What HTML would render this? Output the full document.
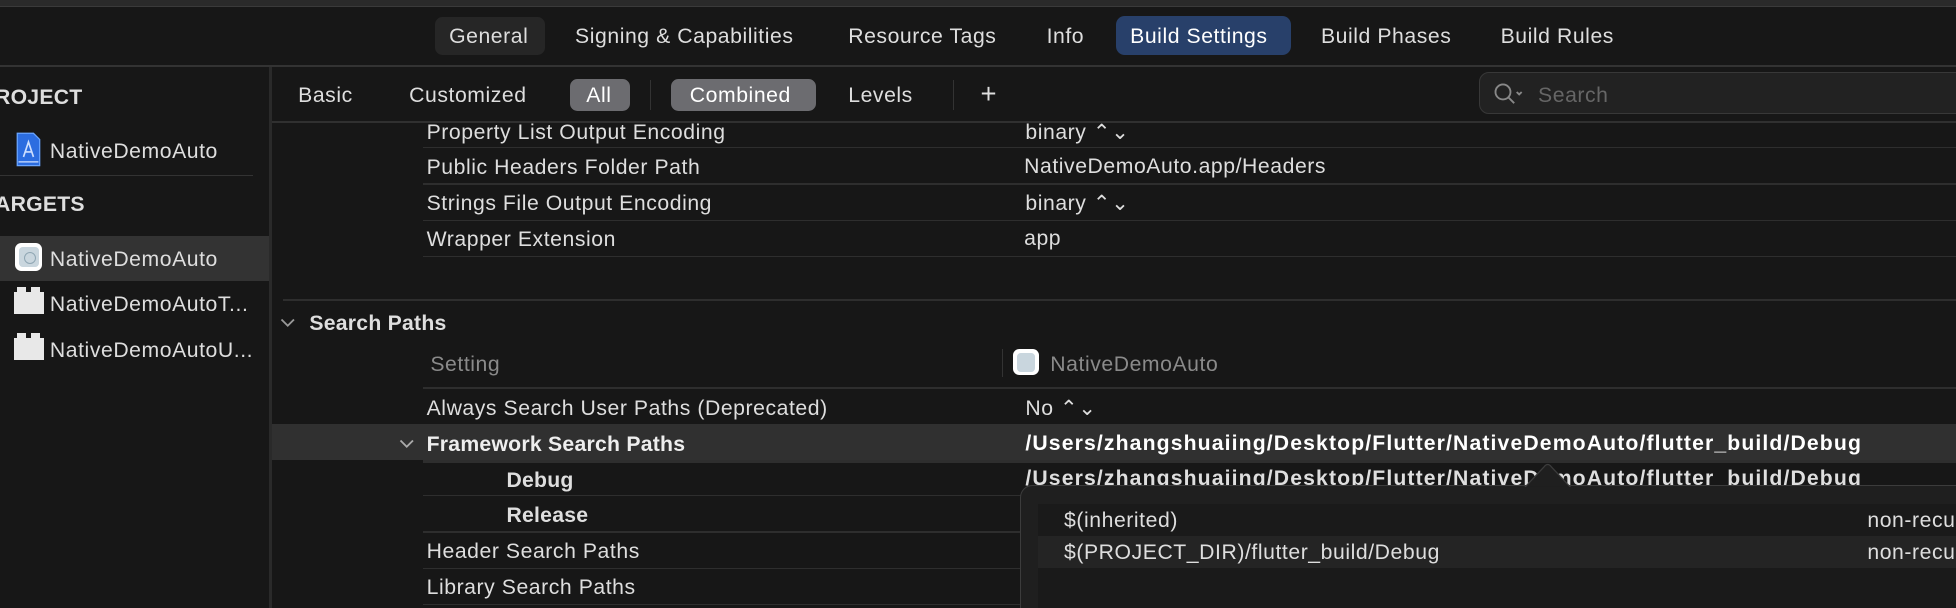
<!DOCTYPE html>
<html><head><meta charset="utf-8">
<style>
html,body{margin:0;padding:0;background:#171717;width:1956px;height:608px;overflow:hidden}
#w{zoom:1.2474;position:relative;width:1568px;height:488px;font-family:"Liberation Sans",sans-serif;color:#dedede;font-size:17px;background:#171717}
.a{position:absolute;white-space:nowrap;line-height:20px;margin-top:2px;letter-spacing:0.45px}
.hl{position:absolute;height:1px;background:#2e2e2e}
.b{font-weight:bold;letter-spacing:0.2px}
.g{color:#8a8a8a}
</style></head><body><div id="w">
<div style="position:absolute;left:0;top:0;width:1568px;height:5px;background:#2a2a2a"></div>
<div style="position:absolute;left:0;top:5px;width:1568px;height:1px;background:#3a3a3a"></div>
<div style="position:absolute;left:349px;top:14px;width:88px;height:30px;background:#262626;border-radius:6px"></div>
<div style="position:absolute;left:895px;top:13px;width:140px;height:31px;background:#28406a;border-radius:7px"></div>
<div class="a" style="left:360px;top:18px">General</div>
<div class="a" style="left:461px;top:18px">Signing &amp; Capabilities</div>
<div class="a" style="left:680px;top:18px">Resource Tags</div>
<div class="a" style="left:839px;top:18px">Info</div>
<div class="a" style="left:906px;top:18px;color:#fff">Build Settings</div>
<div class="a" style="left:1059px;top:18px">Build Phases</div>
<div class="a" style="left:1203px;top:18px">Build Rules</div>
<div style="position:absolute;left:0;top:52px;width:1568px;height:2px;background:#333"></div>
<div style="position:absolute;left:216px;top:54px;width:2px;height:434px;background:#2a2a2a"></div>
<div class="a b" style="left:-4px;top:67px;font-size:17px">ROJECT</div>
<svg style="position:absolute;left:13px;top:106px" width="20" height="28" viewBox="0 0 20 28"><path d="M1 1h13l5 5v21H1z" fill="#2c6de0" stroke="#6aa5ff"/><path d="M6 20l4-12 4 12M7 16h6" stroke="#cfe0ff" fill="none" stroke-width="1.3"/><path d="M2 24h16" stroke="#cfe0ff"/></svg>
<div class="a" style="left:40px;top:110px">NativeDemoAuto</div>
<div style="position:absolute;left:0;top:140px;width:203px;height:1px;background:#333"></div>
<div class="a b" style="left:-4px;top:153px">ARGETS</div>
<div style="position:absolute;left:0;top:189px;width:216px;height:36px;background:#333"></div>
<div style="position:absolute;left:12px;top:195px;width:22px;height:22px;background:#fff;border-radius:5px"></div>
<div style="position:absolute;left:15px;top:198px;width:16px;height:16px;background:#c9d6de;border-radius:3px"></div>
<div style="position:absolute;left:19px;top:202px;width:8px;height:8px;border:1px solid #8fa6b3;border-radius:50%"></div>
<div class="a" style="left:40px;top:197px">NativeDemoAuto</div>
<div style="position:absolute;left:11px;top:234px;width:24px;height:18px;background:#e8e8e8"></div>
<div style="position:absolute;left:14px;top:230px;width:7px;height:5px;background:#e8e8e8"></div>
<div style="position:absolute;left:25px;top:230px;width:7px;height:5px;background:#e8e8e8"></div>
<div class="a" style="left:40px;top:233px">NativeDemoAutoT...</div>
<div style="position:absolute;left:11px;top:271px;width:24px;height:18px;background:#e8e8e8"></div>
<div style="position:absolute;left:14px;top:267px;width:7px;height:5px;background:#e8e8e8"></div>
<div style="position:absolute;left:25px;top:267px;width:7px;height:5px;background:#e8e8e8"></div>
<div class="a" style="left:40px;top:270px">NativeDemoAutoU...</div>
<div class="a" style="left:239px;top:65px">Basic</div>
<div class="a" style="left:328px;top:65px">Customized</div>
<div style="position:absolute;left:457px;top:63px;width:48px;height:26px;background:#6c6c70;border-radius:6px"></div>
<div class="a" style="left:470px;top:65px;color:#fff">All</div>
<div style="position:absolute;left:521px;top:64px;width:1px;height:24px;background:#333"></div>
<div style="position:absolute;left:538px;top:63px;width:116px;height:26px;background:#6c6c70;border-radius:6px"></div>
<div class="a" style="left:553px;top:65px;color:#fff">Combined</div>
<div class="a" style="left:680px;top:65px">Levels</div>
<div style="position:absolute;left:764px;top:64px;width:1px;height:24px;background:#333"></div>
<div class="a" style="left:786px;top:64px;font-size:22px">+</div>
<div style="position:absolute;left:1186px;top:58px;width:400px;height:33px;background:#222;border:1px solid #383838;border-radius:8px;box-sizing:border-box"></div>
<svg style="position:absolute;left:1197px;top:66px" width="26" height="20" viewBox="0 0 26 20"><circle cx="8" cy="8" r="6" fill="none" stroke="#888" stroke-width="1.5"/><path d="M12 12l5 5M19 8l2 2 2-2" stroke="#888" stroke-width="1.5" fill="none"/></svg>
<div class="a g" style="left:1233px;top:65px;color:#666">Search</div>
<div style="position:absolute;left:218px;top:97px;width:1350px;height:2px;background:#303030"></div>
<div class="a" style="left:342px;top:95px">Property List Output Encoding</div>
<div class="a" style="left:822px;top:95px">binary ⌃⌄</div>
<div class="hl" style="left:339px;top:118px;width:1229px"></div>
<div class="a" style="left:342px;top:123px">Public Headers Folder Path</div>
<div class="a" style="left:821px;top:122px">NativeDemoAuto.app/Headers</div>
<div class="hl" style="left:339px;top:147px;width:1229px"></div>
<div class="a" style="left:342px;top:152px">Strings File Output Encoding</div>
<div class="a" style="left:822px;top:152px">binary ⌃⌄</div>
<div class="hl" style="left:339px;top:176px;width:1229px"></div>
<div class="a" style="left:342px;top:181px">Wrapper Extension</div>
<div class="a" style="left:821px;top:180px">app</div>
<div class="hl" style="left:339px;top:205px;width:1229px"></div>
<div class="hl" style="left:227px;top:240px;width:1341px"></div>
<svg style="position:absolute;left:224px;top:254px" width="14" height="10"><path d="M2 2l5 5 5-5" stroke="#999" fill="none" stroke-width="1.5"/></svg>
<div class="a b" style="left:248px;top:248px">Search Paths</div>
<div class="a g" style="left:345px;top:281px">Setting</div>
<div style="position:absolute;left:803px;top:280px;width:1px;height:22px;background:#333"></div>
<div style="position:absolute;left:812px;top:280px;width:21px;height:21px;background:#fff;border-radius:5px"></div>
<div style="position:absolute;left:815px;top:283px;width:15px;height:15px;background:#c9d6de;border-radius:3px"></div>
<div class="a g" style="left:842px;top:281px">NativeDemoAuto</div>
<div class="hl" style="left:339px;top:310px;width:1229px;height:2px"></div>
<div class="a" style="left:342px;top:316px">Always Search User Paths (Deprecated)</div>
<div class="a" style="left:822px;top:316px">No ⌃⌄</div>
<div style="position:absolute;left:218px;top:340px;width:1350px;height:29px;background:#303030"></div>
<svg style="position:absolute;left:319px;top:351px" width="14" height="10"><path d="M2 2l5 5 5-5" stroke="#aaa" fill="none" stroke-width="1.5"/></svg>
<div class="a b" style="left:342px;top:345px;color:#eee">Framework Search Paths</div>
<div class="a b" style="left:822px;top:344px;color:#fff;letter-spacing:0.9px">/Users/zhangshuaiing/Desktop/Flutter/NativeDemoAuto/flutter_build/Debug</div>
<div class="hl" style="left:339px;top:369px;width:1229px;height:2px"></div>
<div class="a b" style="left:406px;top:374px">Debug</div>
<div class="a b" style="left:822px;top:372px;letter-spacing:0.9px">/Users/zhangshuaiing/Desktop/Flutter/NativeDemoAuto/flutter_build/Debug</div>
<div class="hl" style="left:339px;top:397px;width:1229px"></div>
<div class="a b" style="left:406px;top:402px">Release</div>
<div class="hl" style="left:339px;top:426px;width:1229px"></div>
<div class="a" style="left:342px;top:431px">Header Search Paths</div>
<div class="hl" style="left:339px;top:455px;width:1229px"></div>
<div class="a" style="left:342px;top:460px">Library Search Paths</div>
<div class="hl" style="left:339px;top:484px;width:1229px"></div>
<div style="position:absolute;left:818px;top:389px;width:780px;height:120px;background:#1f1f1f;border:1px solid #3c3c3c;border-radius:10px"></div>
<svg style="position:absolute;left:1222px;top:370px" width="40" height="22"><path d="M0 21L16 4Q19 0 22 4L38 21" fill="#1f1f1f" stroke="#3c3c3c"/><rect x="0" y="20" width="40" height="3" fill="#1f1f1f"/></svg>
<div style="position:absolute;left:832px;top:404px;width:736px;height:26px;background:#1a1a1a"></div>
<div style="position:absolute;left:832px;top:430px;width:736px;height:25px;background:#242424"></div>
<div style="position:absolute;left:832px;top:455px;width:736px;height:33px;background:#1a1a1a"></div>
<div class="a" style="left:853px;top:406px">$(inherited)</div>
<div class="a" style="left:1497px;top:406px">non-recursive</div>
<div class="a" style="left:853px;top:432px">$(PROJECT_DIR)/flutter_build/Debug</div>
<div class="a" style="left:1497px;top:432px">non-recursive</div>
</div></body></html>
